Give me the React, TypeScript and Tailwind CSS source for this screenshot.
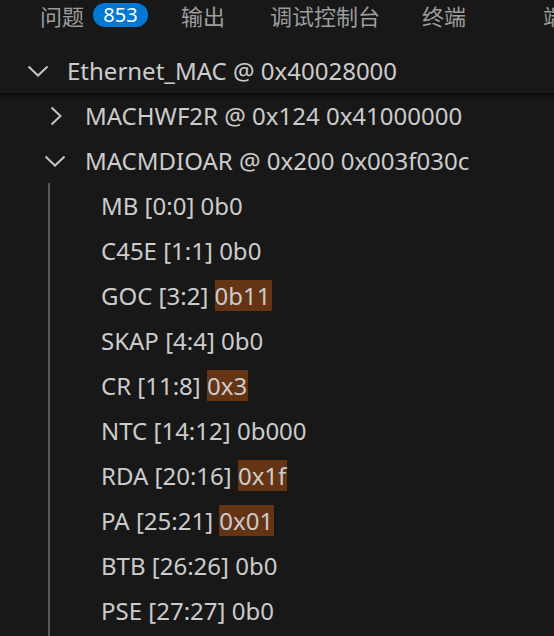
import React from "react";

const font = { fontFamily: '"Noto Sans", "Noto Sans CJK SC", sans-serif' };
const cjk = { fontFamily: '"Noto Sans CJK SC", "Noto Sans", sans-serif' };

function ChevronDown() {
  return (
    <svg width="22" height="12" viewBox="0 0 22 12" className="shrink-0">
      <path d="M1.5 1.5 L11 10.5 L20.5 1.5" fill="none" stroke="#c5c5c5" strokeWidth="2" />
    </svg>
  );
}

function ChevronRight() {
  return (
    <svg width="12" height="20" viewBox="0 0 12 20" className="shrink-0">
      <path d="M1.5 1.5 L10.5 10 L1.5 18.5" fill="none" stroke="#c5c5c5" strokeWidth="2" />
    </svg>
  );
}

const fields: { name: string; value: string; changed?: boolean }[] = [
  { name: "MB [0:0]", value: "0b0" },
  { name: "C45E [1:1]", value: "0b0" },
  { name: "GOC [3:2]", value: "0b11", changed: true },
  { name: "SKAP [4:4]", value: "0b0" },
  { name: "CR [11:8]", value: "0x3", changed: true },
  { name: "NTC [14:12]", value: "0b000" },
  { name: "RDA [20:16]", value: "0x1f", changed: true },
  { name: "PA [25:21]", value: "0x01", changed: true },
  { name: "BTB [26:26]", value: "0b0" },
  { name: "PSE [27:27]", value: "0b0" },
];

export default function App() {
  return (
    <div className="w-[554px] h-[636px] overflow-hidden bg-[#181818] text-[#cccccc]" style={font}>
      {/* tabs */}
      <div className="h-[30px] flex items-center whitespace-nowrap overflow-hidden text-[22px] text-[#9d9d9d]" style={cjk}>
        <div className="ml-[40px] flex items-center shrink-0">
          <span>问题</span>
          <span className="ml-[9px] h-[24px] w-[55px] rounded-full bg-[#0078d4] text-white text-[20px] flex items-center justify-center leading-none" style={font}>853</span>
        </div>
        <span className="ml-[33px] shrink-0">输出</span>
        <span className="ml-[45px] shrink-0">调试控制台</span>
        <span className="ml-[42px] shrink-0">终端</span>
        <span className="ml-[77px] shrink-0">端口</span>
      </div>
      <div className="h-[18px]" />
      {/* sticky row */}
      <div className="relative h-[45px] flex items-center text-[24px] whitespace-nowrap">
        <div className="ml-[27px] w-[40px]"><ChevronDown /></div>
        <span>Ethernet_MAC @ 0x40028000</span>
        <div className="absolute left-0 right-0 -bottom-[6px] h-[6px] bg-gradient-to-b from-[#0c0c0c] to-transparent" />
      </div>
      <div className="text-[24px] whitespace-nowrap">
        <div className="h-[45px] flex items-center">
          <div className="ml-[50px] w-[35px]"><ChevronRight /></div>
          <span>MACHWF2R @ 0x124 0x41000000</span>
        </div>
        <div className="h-[45px] flex items-center">
          <div className="ml-[44px] w-[41px]"><ChevronDown /></div>
          <span>MACMDIOAR @ 0x200 0x003f030c</span>
        </div>
        <div className="flex">
          <div className="ml-[48px] w-[2px] bg-[#585858]" />
          <div className="ml-[51px] flex flex-col">
            {fields.map((f) => (
              <div key={f.name} className="h-[45px] flex items-center">
                <span>{f.name}&nbsp;</span>
                {f.changed ? (
                  <span className="bg-[#643414] h-[31px] flex items-center pr-[1px]">{f.value}</span>
                ) : (
                  <span>{f.value}</span>
                )}
              </div>
            ))}
            <div className="h-[45px]" />
          </div>
        </div>
      </div>
    </div>
  );
}
